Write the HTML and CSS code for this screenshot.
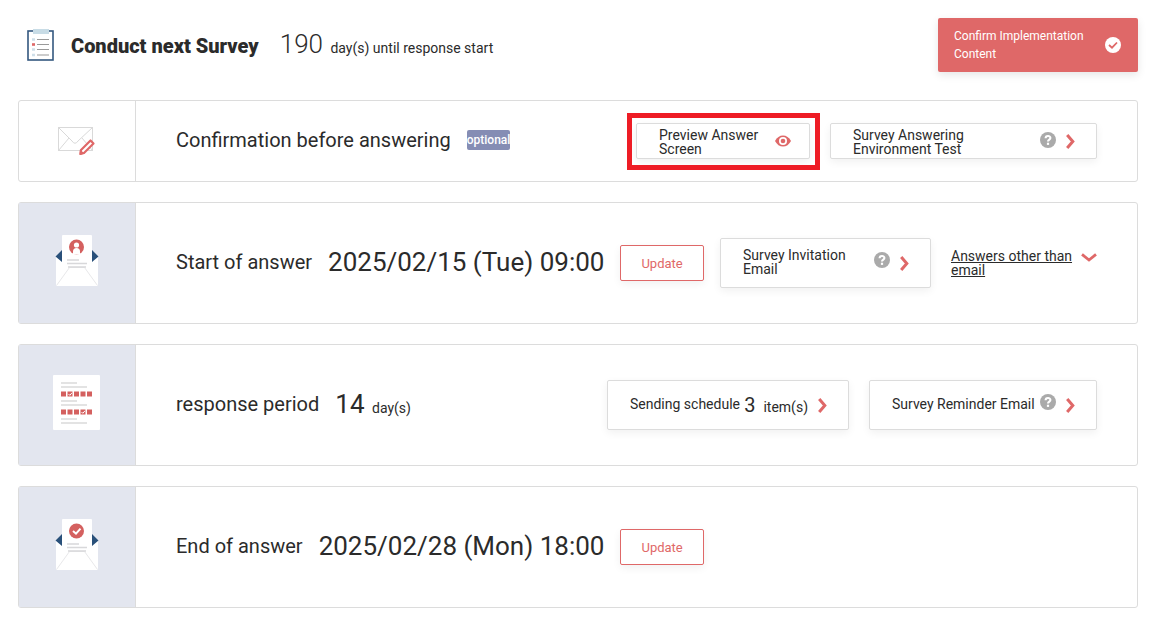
FILE: index.html
```html
<!DOCTYPE html>
<html lang="en">
<head>
    <meta charset="UTF-8">
    <meta name="viewport" content="width=device-width, initial-scale=1.0">
    <title>Conduct next Survey</title>
    <link rel="stylesheet" href="styles.css">
</head>
<body>
    <!-- shared icons -->
    <svg class="icon-defs" width="0" height="0">
        <symbol id="chevron" viewBox="0 0 9 15">
            <path d="M1.2 1 L6.8 7.5 L1.2 14" fill="none" stroke="#df6868" stroke-width="3"/>
        </symbol>
        <symbol id="chevron-down" viewBox="0 0 16 9">
            <path d="M1 1.4 L8 7 L15 1.4" fill="none" stroke="#df6868" stroke-width="2.8"/>
        </symbol>
        <symbol id="help" viewBox="0 0 16 16">
            <circle cx="8" cy="8" r="8" fill="#aaa"/>
            <path d="M5.6 6.3 C5.6 3.3 10.4 3.3 10.4 6.1 C10.4 7.6 8 7.6 8 9.6" fill="none" stroke="#fff" stroke-width="2.1"/>
            <rect x="6.9" y="10.7" width="2.2" height="2.2" fill="#fff"/>
        </symbol>
        <symbol id="envelope" viewBox="0 0 44 52">
            <path d="M1 22 H43 V50 Q43 51 42 51 H2 Q1 51 1 50 Z" fill="#fff"/>
            <path d="M0.5 21.5 L7 15 V27 Z M43.5 21.5 L37 15 V27 Z" fill="#29507a"/>
            <path d="M7 1 Q7 0 8 0 H36 Q37 0 37 1 V33 H7 Z" fill="#fff"/>
            <path d="M1.5 50.5 L14.5 32.5 H29.5 L42.5 50.5" fill="none" stroke="#e8e8ea"/>
            <path d="M12 25 H24 M12 28.500 H32 M13 32 H31" stroke="#d8d8da" stroke-width="1.6"/>
        </symbol>
    </svg>

    <header class="page-header">
        <svg class="survey-icon" width="28" height="32" viewBox="0 0 28 32">
            <rect x="1" y="2" width="25" height="29" fill="#fff" stroke="#34587f" stroke-width="1.6"/>
            <rect x="6" y="0" width="16" height="5" fill="#c8dce6"/>
            <path d="M10 10.5 H22 M10 15.5 H22 M10 20.5 H22 M10 26 H22" stroke="#9a9a9a" stroke-width="1.2"/>
            <path d="M5 10.5 H8 M5 20.5 H8 M5 26 H8" stroke="#cfdfe9" stroke-width="2.6"/>
            <path d="M5 15.5 H8" stroke="#df6868" stroke-width="2.6"/>
        </svg>
        <h1>Conduct next Survey</h1>
        <p class="countdown"><span class="countdown-num">190</span> <span class="unit">day(s) until response start</span></p>
        <button type="button" class="confirm-btn">
            <span>Confirm Implementation Content</span>
            <svg width="16" height="16" viewBox="0 0 16 16">
                <circle cx="8" cy="8" r="8" fill="#fff"/>
                <path d="M4 8 L7 10.7 L12 5.5" fill="none" stroke="#df6868" stroke-width="1.8"/>
            </svg>
        </button>
    </header>

    <main class="steps">
        <section class="step step-small">
            <div class="step-icon plain">
                <svg width="38" height="30" viewBox="0 0 38 30">
                    <g fill="none" stroke="#d9d9d9">
                        <rect x="0.5" y="1.5" width="34" height="23"/>
                        <path d="M0.5 1.5 L14 15 Q17 19.500 20 15 L34.5 1.5 M0.5 24.5 L11 12 M24 12 L34.5 24.5"/>
                    </g>
                    <path d="M32.5 14.5 L35.5 17.5 L26 27 L22.5 28 L23 24 Z" fill="#fff" stroke="#df6868" stroke-width="2.2" stroke-linejoin="round"/>
                    <path d="M22 23.5 L26.5 27.5 L21.5 29 Z" fill="#df6868"/>
                </svg>
            </div>
            <div class="step-body">
                <h2>Confirmation before answering</h2>
                <span class="tag">optional</span>
                <div class="actions">
                    <button type="button" class="box-btn preview highlight">
                        <span class="btn-text">Preview Answer Screen</span>
                        <svg class="eye" width="16" height="12" viewBox="0 0 16 12">
                            <path d="M0 6 Q3 0.5 8 0.5 T16 6 Q13 11.5 8 11.5 T0 6 Z" fill="#df6868"/>
                            <circle cx="8" cy="6" r="4" fill="#fff"/>
                            <circle cx="8" cy="6" r="2.3" fill="#df6868"/>
                        </svg>
                    </button>
                    <button type="button" class="box-btn env-test">
                        <span class="btn-text">Survey Answering Environment Test</span>
                        <svg class="help"><use href="#help"/></svg>
                        <svg class="chevron"><use href="#chevron"/></svg>
                    </button>
                </div>
            </div>
        </section>

        <section class="step">
            <div class="step-icon">
                <svg width="44" height="52" viewBox="0 0 44 52">
                    <use href="#envelope"/>
                    <circle cx="21.5" cy="12" r="7.5" fill="#d4605f"/>
                    <circle cx="21.5" cy="10" r="2.6" fill="#fff"/>
                    <path d="M18 19.5 V16.5 Q18 13 21.5 13 T25 16.5 V19.5 Z" fill="#fff"/>
                </svg>
            </div>
            <div class="step-body">
                <h2>Start of answer</h2>
                <time class="big" datetime="2025-02-15T09:00">2025/02/15 (Tue) 09:00</time>
                <button type="button" class="update-btn">Update</button>
                <div class="actions">
                    <button type="button" class="box-btn tall invitation">
                        <span class="btn-text">Survey Invitation Email</span>
                        <svg class="help raised"><use href="#help"/></svg>
                        <svg class="chevron"><use href="#chevron"/></svg>
                    </button>
                    <a href="#" class="other-link">
                        <span>Answers other than email</span>
                        <svg width="16" height="9"><use href="#chevron-down"/></svg>
                    </a>
                </div>
            </div>
        </section>

        <section class="step">
            <div class="step-icon">
                <svg width="48" height="56" viewBox="0 0 48 56">
                    <rect width="47" height="55" rx="1" fill="#fff"/>
                    <path d="M8 8 H24 M8 12 H34 M8 26 H24 M8 30 H34 M8 44 H24 M8 48 H34" stroke="#dadada" stroke-width="1.6"/>
                    <path d="M8 19 H39 M8 37 H39" stroke="#d4605f" stroke-width="5" stroke-dasharray="5 1.5"/>
                    <path d="M15.5 19 L16.8 20.3 L19 17.8 M28.5 37 L29.8 38.3 L32 35.8" fill="none" stroke="#fff"/>
                </svg>
            </div>
            <div class="step-body">
                <h2>response period</h2>
                <p class="period"><span class="big">14</span> <span class="unit">day(s)</span></p>
                <div class="actions">
                    <button type="button" class="box-btn tall schedule">
                        <span class="btn-text">Sending schedule</span>
                        <span class="count">3</span>
                        <span class="items">item(s)</span>
                        <svg class="chevron"><use href="#chevron"/></svg>
                    </button>
                    <button type="button" class="box-btn tall reminder">
                        <span class="btn-text">Survey Reminder Email</span>
                        <svg class="help raised"><use href="#help"/></svg>
                        <svg class="chevron"><use href="#chevron"/></svg>
                    </button>
                </div>
            </div>
        </section>

        <section class="step">
            <div class="step-icon">
                <svg width="44" height="52" viewBox="0 0 44 52">
                    <use href="#envelope"/>
                    <circle cx="21.5" cy="12" r="7.5" fill="#d4605f"/>
                    <path d="M18 12 L21 14.7 L25.5 9.7" fill="none" stroke="#fff" stroke-width="2"/>
                </svg>
            </div>
            <div class="step-body">
                <h2>End of answer</h2>
                <time class="big" datetime="2025-02-28T18:00">2025/02/28 (Mon) 18:00</time>
                <button type="button" class="update-btn">Update</button>
            </div>
        </section>
    </main>
</body>
</html>
```
FILE: styles.css
```css
* {
    box-sizing: border-box;
}
body {
    margin: 0;
    padding: 18px 18px 14px;
    font-family: Roboto, "Liberation Sans", sans-serif;
    font-size: 14px;
    color: #2b2b2b;
    background: #fff;
}
h1, h2, p {
    margin: 0;
}
svg {
    display: block;
    flex-shrink: 0;
}
button {
    font-family: inherit;
    color: inherit;
    cursor: pointer;
}
.icon-defs {
    position: absolute;
}

/* header */
.page-header {
    display: flex;
    align-items: center;
    min-height: 54px;
    margin-bottom: 28px;
    padding-left: 9px;
}
.page-header h1 {
    margin: 2px 21px 0 16px;
    font-size: 20px;
    font-weight: 900;
    line-height: 24px;
}
.countdown {
    padding-bottom: 2px;
}
.countdown-num {
    margin-right: 4px;
    font-size: 26px;
    font-weight: 300;
}
.confirm-btn {
    display: flex;
    align-items: center;
    justify-content: space-between;
    width: 200px;
    height: 54px;
    margin-left: auto;
    padding: 0 17px 0 16px;
    border: none;
    border-radius: 2px;
    background: #df6868;
    color: #fff;
    font-size: 12px;
    line-height: 18px;
    text-align: left;
    box-shadow: 0 3px 8px rgba(0, 0, 0, 0.1);
}
.confirm-btn span {
    width: 140px;
}

/* steps */
.steps {
    display: flex;
    flex-direction: column;
    gap: 20px;
}
.step {
    display: flex;
    min-height: 122px;
    border: 1px solid #dcdcdc;
    border-radius: 3px;
}
.step-small {
    min-height: 82px;
}
.step-icon {
    display: flex;
    align-items: center;
    justify-content: center;
    width: 117px;
    padding-bottom: 4px;
    border-right: 1px solid #dcdcdc;
    background: #e3e6ef;
}
.step-icon.plain {
    padding: 0;
    background: none;
}
.step-body {
    display: flex;
    flex: 1;
    align-items: center;
    padding: 0 40px;
}
.step-body h2 {
    margin-right: 16px;
    padding-bottom: 2px;
    font-size: 20px;
    font-weight: 400;
    line-height: 24px;
}
.big {
    font-size: 26px;
    line-height: 30px;
    padding-bottom: 2px;
}
.period {
    padding-bottom: 2px;
}
.period .big {
    margin-right: 4px;
}
.tag {
    height: 20px;
    margin-bottom: 2px;
    border-radius: 2px;
    background: #858db4;
    color: #fff;
    font-size: 12px;
    font-weight: 500;
    line-height: 20px;
}
.update-btn {
    height: 36px;
    margin-left: 16px;
    padding: 0 20px;
    border: 1px solid #df6868;
    border-radius: 2px;
    background: #fff;
    color: #df6868;
    font-size: 13px;
    box-shadow: 0 3px 8px rgba(0, 0, 0, 0.06);
}
.actions {
    display: flex;
    align-items: center;
    gap: 20px;
    margin-left: auto;
}
.box-btn {
    position: relative;
    display: flex;
    align-items: center;
    height: 36px;
    padding: 0 21px 0 22px;
    border: 1px solid #dcdcdc;
    border-radius: 2px;
    background: #fff;
    font-size: 14px;
    line-height: 14px;
    text-align: left;
    box-shadow: 0 3px 8px rgba(0, 0, 0, 0.06);
}
.box-btn.tall {
    height: 50px;
}
.box-btn .btn-text {
    margin-right: auto;
    padding-top: 2px;
}
.box-btn.tall .btn-text {
    padding: 0 0 2px;
}
.help {
    width: 16px;
    height: 16px;
    margin-bottom: 2px;
}
.help.raised {
    margin-bottom: 6px;
}
.chevron {
    width: 9px;
    height: 15px;
    margin-left: 10px;
}
.box-btn.preview {
    width: 174px;
    padding-right: 18px;
}
.preview .btn-text {
    width: 104px;
}
.highlight::after {
    content: "";
    position: absolute;
    inset: -11px -11px -12px -10px;
    border: 5px solid #ee1c25;
}
.env-test {
    width: 267px;
}
.env-test .btn-text {
    width: 124px;
}
.invitation {
    width: 211px;
}
.invitation .btn-text {
    width: 110px;
}
.schedule {
    width: 242px;
    white-space: nowrap;
}
.count {
    margin-right: 8px;
    font-size: 20px;
}
.items {
    padding-top: 4px;
}
.reminder {
    width: 228px;
}
.other-link {
    display: flex;
    align-items: flex-start;
    gap: 8px;
    color: inherit;
    line-height: 14px;
}
.other-link span {
    width: 122px;
}
.other-link svg {
    margin-top: 4px;
}
```
